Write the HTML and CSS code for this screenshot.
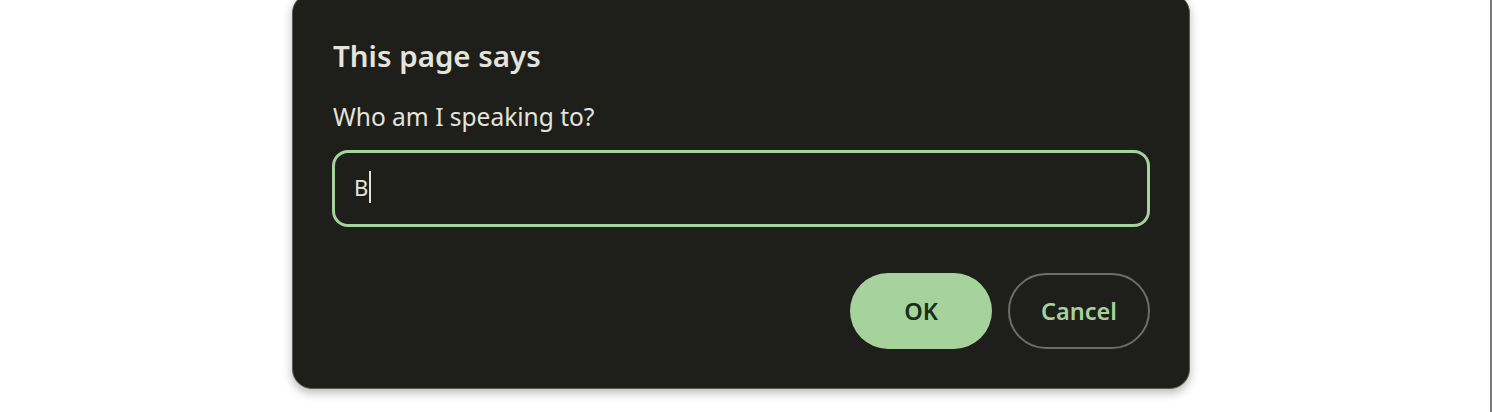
FILE: index.html
```html
<!DOCTYPE html>
<html>
<head>
<meta charset="utf-8">
<link rel="stylesheet" href="styles.css">
</head>
<body>
<div class="page">
  <div class="dialog" role="dialog">
    <h1 class="title">This page says</h1>
    <p class="message">Who am I speaking to?</p>
    <div class="field"><span class="value">B</span><span class="caret"></span></div>
    <div class="actions">
      <button class="btn btn-ok">OK</button>
      <button class="btn btn-cancel">Cancel</button>
    </div>
  </div>
  <div class="edge"></div>
</div>
</body>
</html>
```
FILE: styles.css
```css
html, body {
  margin: 0;
  padding: 0;
  background: #ffffff;
  height: 100%;
  overflow: hidden;
}
.page {
  display: flex;
  justify-content: space-between;
  align-items: flex-start;
  height: 412px;
  padding-left: 292px;
  box-sizing: border-box;
}
.dialog {
  margin-top: -7px;
  width: 898px;
  height: 396px;
  box-sizing: border-box;
  background: #1e1f1b;
  border: 1px solid #5a5b57;
  border-radius: 20px;
  box-shadow: 0 4px 10px rgba(0,0,0,0.28);
  padding: 42px 39px 0 39px;
  font-family: "Noto Sans", "Open Sans", sans-serif;
  color: #e4e4dd;
  display: flex;
  flex-direction: column;
}
.title {
  margin: 0;
  font-size: 29.5px;
  font-weight: 600;
  line-height: 40px;
  padding-left: 1px;
}
.message {
  margin: 26px 0 0 0;
  font-size: 24.5px;
  line-height: 30px;
  padding-left: 1px;
}
.field {
  margin-top: 18px;
  height: 77px;
  box-sizing: border-box;
  border: 3px solid #a6d29b;
  border-radius: 16px;
  display: flex;
  align-items: center;
  padding-left: 19px;
  padding-bottom: 4px;
  font-size: 22px;
  color: #e4e4dd;
}
.caret {
  display: inline-block;
  width: 2px;
  height: 32px;
  background: #e4e4dd;
  margin-left: 1px;
}
.actions {
  margin-top: 46px;
  display: flex;
  justify-content: flex-end;
  gap: 16px;
}
.btn {
  width: 142px;
  height: 76px;
  border-radius: 38px;
  font-family: "Noto Sans", "Open Sans", sans-serif;
  font-size: 23.5px;
  font-weight: 600;
  cursor: pointer;
}
.btn-ok {
  background: #a6d29b;
  border: none;
  color: #163018;
}
.btn-cancel {
  background: transparent;
  border: 2px solid #6c6e68;
  color: #a6d29b;
}
.edge {
  width: 2px;
  height: 412px;
  background: #7a7a7a;
  margin-right: 0;
}
```
